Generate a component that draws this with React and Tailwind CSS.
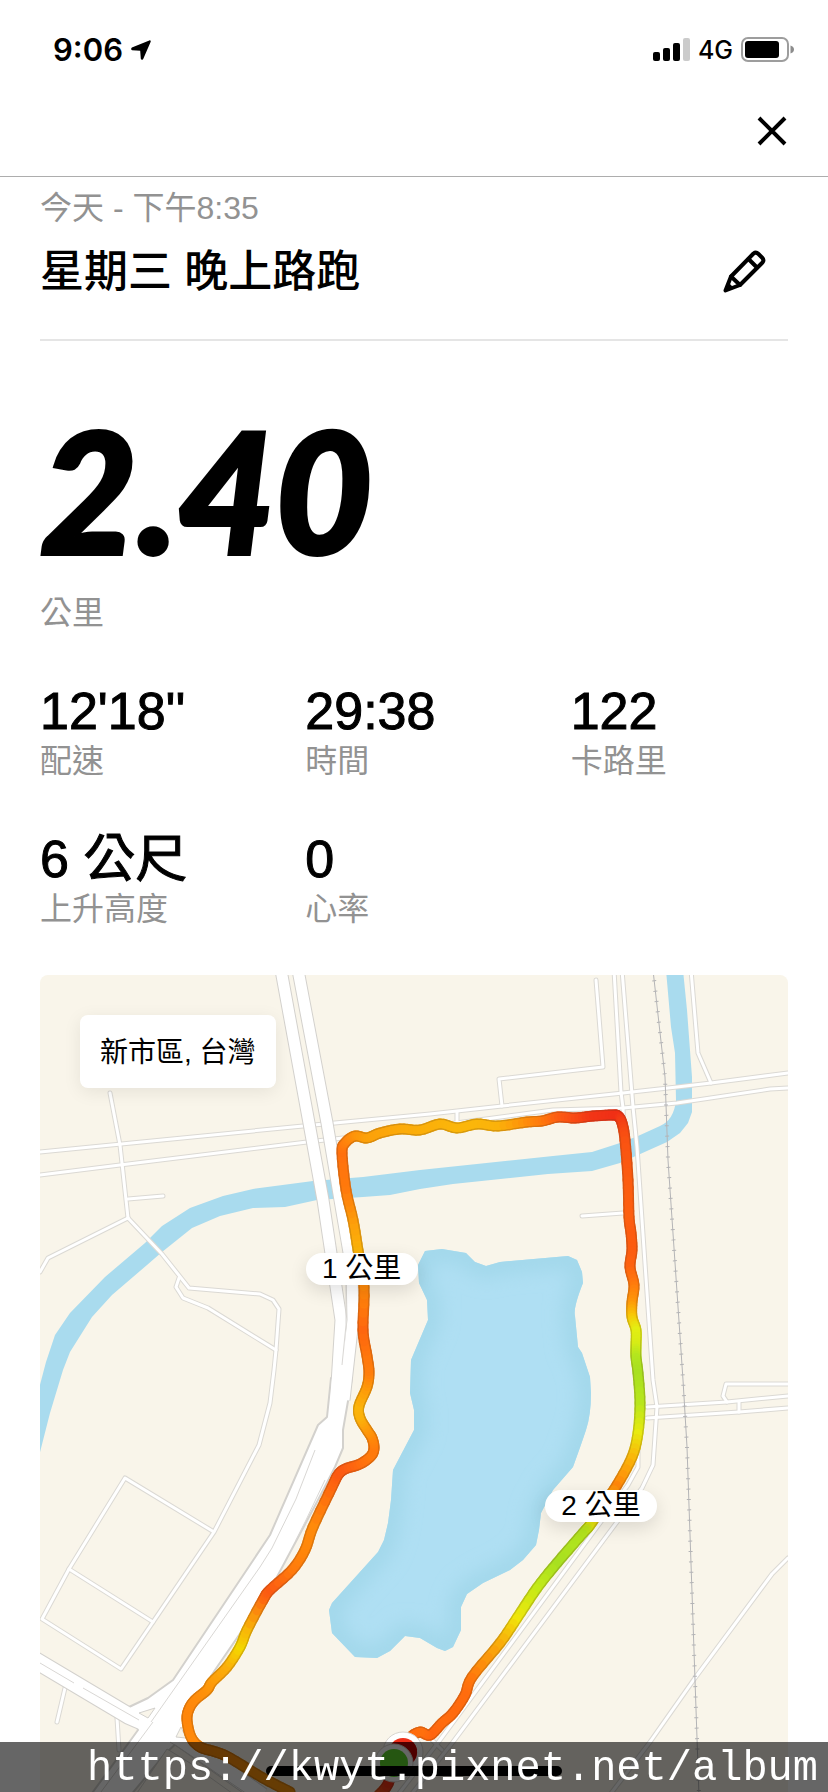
import React from "react";

const ROUTE = [
  [290, 1792, "#ff960a"], [263, 1778, "#ff960a"], [230, 1758, "#ff8f0a"], [216, 1752, "#ff8f0a"], [200, 1747, "#ff8a0a"], [191, 1737, "#ff8a0a"],
  [187, 1720, "#ff860a"], [189, 1709, "#ff860a"], [195, 1700, "#ff8a0a"], [207, 1690, "#fe920a"], [212, 1682, "#fd9a0a"],
  [227, 1667, "#fbae0a"], [240, 1647, "#f3d800"], [247, 1630, "#f8b808"], [263, 1600, "#fd6a10"], [270, 1590, "#fb5a12"],
  [292, 1570, "#ff7a0c"], [305, 1550, "#ff860a"], [313, 1527, "#ff8a0a"], [332, 1487, "#fe660f"], [338, 1475, "#fb5a12"], [345, 1469, "#fb5a12"],
  [360, 1464, "#ff6c0e"], [371, 1456, "#ff7a0c"], [374, 1448, "#ff7a0c"], [372, 1438, "#ff860a"], [367, 1430, "#fe960a"], [360, 1418, "#fbb00a"],
  [359, 1406, "#fbb40a"], [367, 1387, "#fe980a"], [369, 1372, "#ff7e0c"], [367, 1356, "#ff780c"], [363, 1330, "#fe660f"],
  [364, 1287, "#ff8a0a"], [358, 1250, "#fbb40a"], [353, 1220, "#fd9c0a"], [346, 1190, "#ff7a0c"], [342, 1153, "#ff700e"],
  [345, 1143, "#ff7e0c"], [355, 1136, "#fe920a"], [367, 1138, "#fca00a"], [380, 1133, "#fca40a"], [400, 1129, "#fcaa0a"],
  [420, 1130, "#fbae0a"], [440, 1124, "#fbb20a"], [457, 1128, "#fbb60a"], [477, 1124, "#fbb60a"], [498, 1126, "#fbb20a"],
  [527, 1122, "#ff8c0a"], [542, 1121, "#ff7a0c"], [558, 1117, "#fd5e12"], [575, 1118, "#f84a14"], [593, 1116, "#f23516"],
  [612, 1115, "#f03016"], [618, 1116, "#f03016"], [622, 1123, "#f44014"], [625, 1140, "#f95212"], [628, 1180, "#fc5c10"], [629, 1217, "#fd6010"],
  [631, 1233, "#fc5c10"], [632, 1250, "#fc5c10"], [630, 1267, "#fd6210"], [634, 1285, "#ff7a0c"], [632, 1302, "#fe960a"],
  [632, 1317, "#f8c808"], [636, 1330, "#e4ee12"], [636, 1345, "#d6ec16"], [636, 1357, "#b4e61e"], [638, 1373, "#a8e020"],
  [640, 1403, "#b8e61c"], [638, 1433, "#e8ea0e"], [632, 1457, "#f9b80a"], [617, 1485, "#ff860a"], [604, 1504, "#f8c008"],
  [590, 1525, "#e6e80e"], [583, 1533, "#b4e61e"], [557, 1563, "#a8e020"], [537, 1588, "#c4ea18"], [517, 1618, "#f0e60a"],
  [500, 1643, "#f9ac0a"], [472, 1677, "#ff780c"], [465, 1695, "#ff6c0e"], [453, 1713, "#ff6a0e"], [442, 1723, "#ff6c0e"],
  [430, 1735, "#ff640e"], [420, 1732, "#ff700e"], [410, 1738, "#ff6a0e"], [403, 1752, "#f03016"],
];

const START = [[378, 1796, "#f8621a"], [388, 1784, "#f23516"], [394, 1763, "#f03016"]];

const channels = (hex) => [1, 3, 5].map((i) => parseInt(hex.slice(i, i + 2), 16));

function smooth(points, steps = 5) {
  const out = [];
  for (let i = 0; i < points.length - 1; i++) {
    const p0 = points[Math.max(0, i - 1)];
    const p1 = points[i];
    const p2 = points[i + 1];
    const p3 = points[Math.min(points.length - 1, i + 2)];
    const c1 = channels(p1[2]);
    const c2 = channels(p2[2]);
    for (let s = 0; s < steps; s++) {
      const t = s / steps;
      const at = (k) =>
        0.5 * (2 * p1[k] + (p2[k] - p0[k]) * t + (2 * p0[k] - 5 * p1[k] + 4 * p2[k] - p3[k]) * t * t + (3 * p1[k] - p0[k] - 3 * p2[k] + p3[k]) * t * t * t);
      out.push({ x: at(0), y: at(1), color: `rgb(${c1.map((c, k) => Math.round(c + (c2[k] - c) * t)).join(",")})` });
    }
  }
  const last = points[points.length - 1];
  out.push({ x: last[0], y: last[1], color: last[2] });
  return out;
}

function Track({ points }) {
  const pts = smooth(points);
  const segs = (width) =>
    pts.slice(1).map((p, i) => (
      <line key={i} x1={pts[i].x} y1={pts[i].y} x2={p.x} y2={p.y} stroke={pts[i].color} strokeWidth={width} />
    ));
  return (
    <g fill="none" strokeLinecap="round" strokeLinejoin="round">
      {segs(11)}
      <polyline points={pts.map((p) => `${p.x},${p.y}`).join(" ")} stroke="#5a3a1e" strokeOpacity="0.22" strokeWidth="11" />
      {segs(8)}
    </g>
  );
}

const SMALL_ROADS = [
  "M40 1152 303 1126 430 1114 502 1106 623 1093 677 1087 711 1083 788 1073",
  "M40 1175 120 1165 307 1142 343 1138 553 1110 623 1108 677 1103 770 1089 788 1088",
  "M110 1093 120 1145 128 1218",
  "M128 1199 163 1196",
  "M128 1218 48 1258 40 1272",
  "M128 1218 162 1254 189 1288 260 1294 273 1300 279 1309 276 1350 274 1370 270 1403 259 1445 214 1532 153 1622 121 1669 42 1619 69 1569 125 1478 214 1532",
  "M69 1569 153 1622",
  "M179 1278 176 1287 183 1298 208 1308 276 1350",
  "M65 1688 57 1722",
  "M117 1718 119 1750",
  "M596 980 603 1067 499 1079 502 1106",
  "M614 970 621 1092 623 1108 624 1130",
  "M622 970 633 1107 637 1147 653 1380 657 1407 653 1465 642 1488 617 1522 453 1742 410 1796",
  "M638 1440 638 1467 628 1485 600 1523 440 1740 397 1796",
  "M691 970 698 1053 711 1083",
  "M457 1112 457 1124",
  "M582 1216 623 1213",
  "M647 1407 727 1402 788 1396",
  "M647 1418 739 1412 788 1408",
  "M788 1384 726 1384 723 1396 727 1402",
  "M739 1402 739 1412",
  "M788 1558 772 1574 695 1678 650 1742 609 1796",
  "M432 1740 442 1750",
];

const RIVER =
  "M666 970 671 1027 675 1053 676 1100Q674 1120 660 1126L638 1136 620 1143 592 1152 553 1156 420 1170 363 1177 313 1181 253 1189 223 1196 190 1208 162 1226 145 1243 105 1277 70 1313 55 1335 46 1362 36 1400 36 1468 50 1413 63 1370 70 1352 92 1317 112 1295 147 1265 162 1252 192 1228 220 1216 253 1208 285 1207 317 1200 363 1197 390 1195 420 1189 453 1184 548 1174 592 1171 620 1163 638 1155 667 1142 680 1133 688 1123 692 1112 692 1077 687 1010 683 970Z";

const LAKE =
  "M425 1251 442 1249 466 1253 475 1262 486 1266 500 1262 568 1256 577 1260 582 1272 583 1283Q573 1308 575 1316L578 1347 582 1353 590 1377 591 1393Q591 1415 586 1430T573 1467L553 1490 541 1513 539 1530 536 1545 523 1560 510 1570 483 1583 467 1594 461 1607 461 1630 453 1647 445 1651 437 1648 420 1638 405 1636 390 1651 377 1658 355 1657 332 1633 329 1610 332 1603 378 1552 384 1540 388 1523 391 1500 393 1470 414 1430 414 1410 410 1393 411 1360 428 1320 427 1300 419 1283 418 1265Z";

const RAIL = "M653 970 665 1077 668 1160 683 1380 687 1447 695 1680 699 1796";

function MapDrawing() {
  return (
    <svg viewBox="40 975 748 817" className="block w-full" role="img" aria-label="路線地圖">
      <defs>
        <clipPath id="lake"><path d={LAKE} /></clipPath>
        <filter id="soft" x="-10%" y="-10%" width="120%" height="120%"><feGaussianBlur stdDeviation="9" /></filter>
      </defs>
      <rect x="40" y="975" width="748" height="817" fill="#f9f5ea" />
      <path d={RIVER} fill="#a9dbee" />
      <path d={LAKE} fill="#afdff3" />
      <g clipPath="url(#lake)"><path d={LAKE} fill="none" stroke="#a3d8eb" strokeWidth="26" filter="url(#soft)" /></g>

      <g fill="none" strokeLinejoin="round" strokeLinecap="round">
        {SMALL_ROADS.map((d) => <path key={d} d={d} stroke="#dbd9d4" strokeWidth="5" />)}
        {SMALL_ROADS.map((d) => <path key={d} d={d} stroke="#fff" strokeWidth="3" />)}
      </g>

      <g fill="none" stroke="#b4b4b6">
        <path d={RAIL} strokeWidth="1" />
        <path d={RAIL} strokeWidth="4" strokeDasharray="1 9.4" />
      </g>

      <g fill="none" strokeLinejoin="round">
        <g stroke="#d3d1cd">
          <path d="M30 1657 129 1716 180 1738 262 1796" strokeWidth="18" />
          <path d="M281 970 309 1123 323 1200 341 1320 336 1400" strokeWidth="13" />
          <path d="M298 970 327 1123 340 1200 352 1270 353 1320 344 1400" strokeWidth="13" />
          <path d="M331 1378 327 1417 318 1425 270 1535 173 1680 148 1698 129 1707 138 1730 90 1796H130L165 1754 183 1737 186 1715 215 1670 270 1590 318 1500 335 1467 343 1448 343 1430 352 1378Z" strokeWidth="2" fill="#fff" />
        </g>
        <g stroke="#fff">
          <path d="M30 1657 129 1716 180 1738 262 1796" strokeWidth="16" />
          <path d="M281 970 309 1123 323 1200 341 1320 336 1400" strokeWidth="11" />
          <path d="M298 970 327 1123 340 1200 352 1270 353 1320 344 1400" strokeWidth="11" />
        </g>
        <g stroke="#d9d7d4" strokeWidth="1">
          <path d="M346 1280 346 1325 342 1365" />
          <path d="M315 1450 296 1499 272 1548 260 1567 151 1722" />
          <path d="M325 1480 306 1520 296 1540" />
          <path d="M40 1663 74 1683M83 1688 139 1720" />
          <path d="M153 1722 98 1796M170 1742 190 1755 250 1796" />
        </g>
        <path d="M139 1713 155 1708 148 1718Z" fill="#f9f5ea" stroke="#d3d1cd" />
        <path d="M176 1737 181 1727 186 1738Z" fill="#f9f5ea" stroke="#d3d1cd" />
        <path d="M135 1796 167 1749 190 1763 236 1796Z" fill="#f9f5ea" stroke="#d3d1cd" />
      </g>

      <Track points={ROUTE} />
      <Track points={START} />
      <circle cx="403" cy="1752" r="20" fill="#fff" stroke="#d8d5cf" strokeWidth="1" />
      <circle cx="403" cy="1752" r="14" fill="#f0301a" />
      <path d="M393 1742h20a14 14 0 0 1-10 24z" fill="#c40000" />
      <circle cx="394" cy="1763" r="19" fill="#fff" stroke="#d8d5cf" strokeWidth="1" />
      <circle cx="394" cy="1763" r="14" fill="#5cd62c" />
    </svg>
  );
}

function DistanceMarker({ children, className }) {
  return (
    <div className={`absolute flex h-8 w-28 -translate-x-1/2 -translate-y-1/2 items-center justify-center rounded-full bg-white text-[28px] leading-8 whitespace-nowrap shadow-[0_6px_18px_rgba(0,0,0,0.12)] ${className}`}>
      {children}
    </div>
  );
}

const STATS = [
  ["12'18''", "配速"],
  ["29:38", "時間"],
  ["122", "卡路里"],
  ["6 公尺", "上升高度"],
  ["0", "心率"],
];

export default function App() {
  return (
    <div lang="zh-Hant" className="min-h-screen bg-white font-['Liberation_Sans','Noto_Sans_CJK_TC',sans-serif] text-black">
      <div className="flex h-22 items-center justify-between pt-3 pr-[34px] pl-[53px] font-['Inter',sans-serif]">
        <div className="flex items-center gap-2">
          <span className="text-[31px] leading-10 font-semibold">9:06</span>
          <svg viewBox="0 0 20 20" className="size-5" aria-hidden="true">
            <path d="M18.300 .4 .9 7.600Q-.7 9.400 1.100 10.300L9.200 10.700 9.800 18.800Q10.700 20.800 12.200 19L19.700 1.800Q20 .1 18.300 .4Z" />
          </svg>
        </div>
        <div className="flex items-center gap-2">
          <svg viewBox="0 0 37 24" className="h-6 w-[37px]" aria-hidden="true">
            <rect x="0" y="14" width="7" height="9" rx="2" />
            <rect x="10" y="10" width="7" height="13" rx="2" />
            <rect x="20" y="5" width="7" height="18" rx="2" />
            <rect x="30" y="0" width="7" height="23" rx="2" fill="#cbcbcb" />
          </svg>
          <span className="text-[25px] leading-8 font-medium">4G</span>
          <svg viewBox="0 0 53 26" className="h-[26px] w-[53px]" aria-hidden="true">
            <rect x="1" y="1" width="46" height="23" rx="6" fill="none" stroke="#9d9d9d" strokeWidth="2" />
            <rect x="4" y="4" width="34" height="17" rx="3" />
            <path d="M49.500 8.500q3.500 1.200 3.500 4t-3.500 4z" fill="#8c8c8c" />
          </svg>
        </div>
      </div>

      <header className="flex h-[89px] items-center justify-end border-b border-[#adadad] pr-10">
        <button type="button" aria-label="關閉" className="size-8">
          <svg viewBox="0 0 32 32" className="size-8" fill="none" stroke="currentColor" strokeWidth="4">
            <path d="M3 2 29 28M29 2 3 28" />
          </svg>
        </button>
      </header>

      <main className="px-10 pt-[11px]">
        <p className="text-[32px] leading-10 text-[#929292]">今天 - 下午8:35</p>
        <div className="flex h-[113px] items-start justify-between border-b-2 border-[#e5e5e5] pt-4">
          <h1 className="text-[44px] leading-14 font-medium">星期三 晚上路跑</h1>
          <button type="button" aria-label="編輯" className="mt-1 mr-5 size-12">
            <svg viewBox="0 0 48 48" className="size-12" fill="none" stroke="currentColor" strokeWidth="4" strokeLinejoin="round" strokeLinecap="round">
              <path d="M5.500 42.500 11 28.500 33.500 5.500Q36 3.500 38.500 6L42 9.500Q44.500 12 42.500 14.500L20 37Z" />
              <path d="M28.500 11 37 19.500M11 28.500 20 37" />
              <path d="M5.500 42.500 8 35.500 12.500 40Z" fill="currentColor" strokeWidth="2" />
            </svg>
          </button>
        </div>

        <p className="mt-15 font-['Lato',sans-serif] text-[168px] leading-[176px] font-black italic [-webkit-text-stroke:4px_black]">2.40</p>
        <p className="mt-4 text-[32px] leading-10 text-[#929292]">公里</p>

        <dl className="mt-12 grid grid-cols-3 gap-x-12 gap-y-12">
          {STATS.map(([value, label]) => (
            <div key={label} className="flex flex-col-reverse">
              <dt className="text-[32px] leading-10 whitespace-nowrap text-[#929292]">{label}</dt>
              <dd className="text-[52px] leading-15 whitespace-nowrap [-webkit-text-stroke:1px_black]">{value}</dd>
            </div>
          ))}
        </dl>

        <section className="relative mt-[46px] overflow-hidden rounded-t-lg">
          <MapDrawing />
          <div className="absolute top-10 left-10 rounded-lg bg-white px-5 pt-[18px] pb-[15px] text-[28px] leading-10 shadow-[0_4px_18px_rgba(0,0,0,0.08)]">新市區, 台灣</div>
          <DistanceMarker className="top-[36%] left-[43%]">1 公里</DistanceMarker>
          <DistanceMarker className="top-[65%] left-[75%]">2 公里</DistanceMarker>
        </section>
      </main>

      <footer className="fixed inset-x-0 bottom-0 h-[50px] bg-black/60 pr-2.5">
        <div className="absolute bottom-4 left-1/2 h-2.5 w-[296px] -translate-x-1/2 rounded-full bg-black" />
        <p className="relative pt-1 text-right font-['Liberation_Mono',monospace] text-[42px] leading-[46px] whitespace-nowrap text-white">https://kwyt.pixnet.net/album</p>
      </footer>
    </div>
  );
}
